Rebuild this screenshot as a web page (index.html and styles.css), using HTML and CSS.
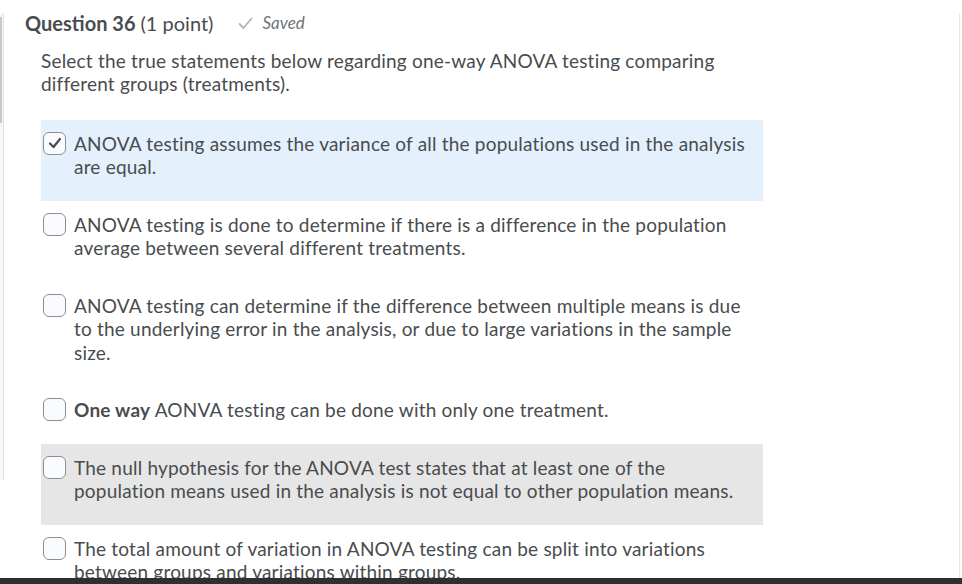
FILE: index.html
```html
<!DOCTYPE html>
<html lang="en">
<head>
<meta charset="utf-8">
<title>Question 36</title>
<link rel="stylesheet" href="styles.css">
</head>
<body>
<div class="frame">
  <div class="left-rail"><div class="thumb"></div></div>
  <main class="main">
    <h2 class="q-head"><span class="q-title">Question 36</span> <span class="q-points">(1 point)</span>
      <span class="saved"><svg class="saved-icon" width="15" height="13" viewBox="0 0 15 13"><polyline points="1.5,7 5.5,11 13.5,1.5" fill="none" stroke="#b1b5b8" stroke-width="1.8" stroke-linecap="round" stroke-linejoin="round"/></svg><em>Saved</em></span>
    </h2>
    <div class="q-body">
      <p class="q-text">Select the true statements below regarding one-way ANOVA testing comparing different groups (treatments).</p>
      <ul class="options">
        <li class="opt opt-selected">
          <span class="box"><svg width="14" height="12" viewBox="0 0 14 12"><polyline points="2,6.5 5.5,10 12,2" fill="none" stroke="#494c4e" stroke-width="2.2" stroke-linecap="round" stroke-linejoin="round"/></svg></span>
          <span class="opt-text">ANOVA testing assumes the variance of all the populations used in the analysis are equal.</span>
        </li>
        <li class="opt">
          <span class="box"></span>
          <span class="opt-text">ANOVA testing is done to determine if there is a difference in the population average between several different treatments.</span>
        </li>
        <li class="opt">
          <span class="box"></span>
          <span class="opt-text">ANOVA testing can determine if the difference between multiple means is due to the underlying error in the analysis, or due to large variations in the sample size.</span>
        </li>
        <li class="opt">
          <span class="box"></span>
          <span class="opt-text"><strong>One way</strong> AONVA testing can be done with only one treatment.</span>
        </li>
        <li class="opt opt-hover">
          <span class="box"></span>
          <span class="opt-text">The null hypothesis for the ANOVA test states that at least one of the population means used in the analysis is not equal to other population means.</span>
        </li>
        <li class="opt">
          <span class="box"></span>
          <span class="opt-text">The total amount of variation in ANOVA testing can be split into variations between groups and variations within groups.</span>
        </li>
      </ul>
    </div>
  </main>
  <div class="right-rail"></div>
</div>
<div class="bottom-bar"></div>
</body>
</html>
```

FILE: styles.css
```css
* { box-sizing: border-box; }
html, body {
  margin: 0;
  padding: 0;
  height: 100%;
  overflow: hidden;
  background: #ffffff;
}
body {
  font-family: Lato, "Open Sans", "Liberation Sans", sans-serif;
  color: #494c4e;
}
.frame {
  display: flex;
  height: 584px;
}
.left-rail {
  width: 4px;
  flex: none;
  margin-top: 13px;
  height: 467px;
  background: #f7f7f7;
  border-right: 1px solid #e3e3e3;
  padding-top: 4px;
}
.thumb {
  width: 2px;
  height: 106px;
  background: #c9c9c9;
}
.main {
  flex: 1;
  padding-left: 21px;
  padding-top: 11px;
  min-width: 0;
}
.right-rail {
  width: 3px;
  flex: none;
  margin-top: 13px;
  border-left: 1px solid #e6e6e6;
  background: #fbfbfb;
}
.q-head {
  margin: 0;
  font-size: 20px;
  line-height: 24px;
  font-weight: 400;
  display: flex;
  align-items: center;
  color: #494c4e;
}
.q-title { font-weight: 700; }
.q-points { margin-left: 5px; }
.saved {
  display: inline-flex;
  align-items: center;
  margin-left: 25px;
  font-size: 17px;
  color: #6e7376;
}
.saved-icon { margin-right: 9px; }
.saved em { font-style: italic; }
.q-body {
  padding-left: 16px;
  padding-top: 14px;
}
.q-text {
  margin: 0 0 24px 0;
  font-size: 19px;
  letter-spacing: 0.2px;
  line-height: 23.4px;
  width: 722px;
}
.options {
  list-style: none;
  margin: 0;
  padding: 0;
  width: 722px;
}
.opt {
  display: flex;
  align-items: flex-start;
  padding: 12px 0 22px 2px;
  font-size: 19px;
  letter-spacing: 0.2px;
  line-height: 23.5px;
}
.opt-selected { background: #e4f1fd; }
.opt-hover { background: #e6e6e6; }
.box {
  flex: none;
  width: 23px;
  height: 23px;
  margin-right: 8px;
  border: 1px solid #8b8f93;
  border-radius: 6px;
  background: #f9fbff;
  display: flex;
  align-items: center;
  justify-content: center;
}
.opt-text { flex: 1; padding-right: 8px; }
.opt-text strong { font-weight: 700; }
.bottom-bar {
  position: fixed;
  left: 0;
  right: 0;
  bottom: 0;
  height: 6px;
  background: #2e2f31;
}
```
